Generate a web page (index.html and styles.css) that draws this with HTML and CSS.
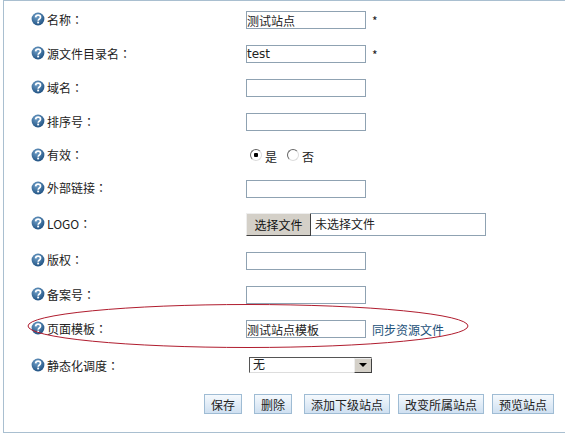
FILE: index.html
```html
<!DOCTYPE html>
<html lang="zh">
<head>
<meta charset="utf-8">
<title>站点</title>
<link rel="stylesheet" href="styles.css">
</head>
<body>
<svg width="0" height="0" class="defs">
  <defs>
    <radialGradient id="hg" cx="40%" cy="30%" r="75%">
      <stop offset="0" stop-color="#6f9fc8"/>
      <stop offset="1" stop-color="#1d4f80"/>
    </radialGradient>
    <symbol id="help" viewBox="0 0 14 14">
      <circle cx="7" cy="7" r="6.4" fill="url(#hg)"/>
      <path d="M4.6 5.4C4.7 3.9 5.8 3.2 7.1 3.2c1.4 0 2.4.8 2.4 2 0 1.9-2.2 1.7-2.3 3.6" fill="none" stroke="#fff" stroke-width="1.7"/>
      <rect x="6.2" y="9.6" width="1.9" height="1.8" fill="#fff"/>
    </symbol>
  </defs>
</svg>
<div class="panel">
  <form class="form">
    <div class="row">
      <label class="label"><svg class="help"><use href="#help"/></svg>名称<span class="colon">：</span></label>
      <div class="field"><input class="text" type="text" value="测试站点"><span class="req">*</span></div>
    </div>
    <div class="row">
      <label class="label"><svg class="help"><use href="#help"/></svg>源文件目录名<span class="colon">：</span></label>
      <div class="field"><input class="text" type="text" value="test"><span class="req">*</span></div>
    </div>
    <div class="row">
      <label class="label"><svg class="help"><use href="#help"/></svg>域名<span class="colon">：</span></label>
      <div class="field"><input class="text" type="text"></div>
    </div>
    <div class="row">
      <label class="label"><svg class="help"><use href="#help"/></svg>排序号<span class="colon">：</span></label>
      <div class="field"><input class="text" type="text"></div>
    </div>
    <div class="row row-short">
      <label class="label"><svg class="help"><use href="#help"/></svg>有效<span class="colon">：</span></label>
      <div class="field radios">
        <label class="radio"><input type="radio" name="valid" checked>是</label>
        <label class="radio"><input type="radio" name="valid">否</label>
      </div>
    </div>
    <div class="row row-short">
      <label class="label"><svg class="help"><use href="#help"/></svg>外部链接<span class="colon">：</span></label>
      <div class="field"><input class="text" type="text"></div>
    </div>
    <div class="row row-logo">
      <label class="label"><svg class="help"><use href="#help"/></svg>LOGO<span class="colon">：</span></label>
      <div class="field">
        <div class="file"><button class="file-btn" type="button">选择文件</button><span class="file-name">未选择文件</span></div>
      </div>
    </div>
    <div class="row row-tall">
      <label class="label"><svg class="help"><use href="#help"/></svg>版权<span class="colon">：</span></label>
      <div class="field"><input class="text" type="text"></div>
    </div>
    <div class="row">
      <label class="label"><svg class="help"><use href="#help"/></svg>备案号<span class="colon">：</span></label>
      <div class="field"><input class="text" type="text"></div>
    </div>
    <div class="row">
      <label class="label"><svg class="help"><use href="#help"/></svg>页面模板<span class="colon">：</span></label>
      <div class="field"><input class="text" type="text" value="测试站点模板"><a class="link" href="#">同步资源文件</a></div>
    </div>
    <div class="row row-select">
      <label class="label"><svg class="help"><use href="#help"/></svg>静态化调度<span class="colon">：</span></label>
      <div class="field">
        <div class="select-wrap">
          <select class="select"><option>无</option></select>
          <span class="select-arrow"></span>
        </div>
      </div>
    </div>
    <div class="actions">
      <button class="btn btn-wide" type="button">保存</button>
      <button class="btn btn-wide" type="button">删除</button>
      <button class="btn" type="button">添加下级站点</button>
      <button class="btn" type="button">改变所属站点</button>
      <button class="btn" type="button">预览站点</button>
    </div>
  </form>
  <svg class="oval" width="445" height="46" viewBox="0 0 445 46">
    <ellipse cx="222" cy="23" rx="220" ry="21.5" fill="none" stroke="#b01c2e" stroke-width="1"/>
  </svg>
</div>
</body>
</html>
```
FILE: styles.css
```css
html, body {
  margin: 0;
  padding: 0;
  background: #fff;
}
body {
  width: 565px;
  height: 436px;
  overflow: hidden;
  font-family: "Noto Sans CJK SC", "DejaVu Sans", sans-serif;
  font-size: 12px;
  color: #222;
}
.defs {
  position: absolute;
}
.panel {
  position: relative;
  box-sizing: border-box;
  height: 433px;
  margin-left: 3px;
  padding-top: 2px;
  border: 1px solid #a9bfd0;
  border-right: 0;
}
.row {
  display: flex;
  align-items: center;
  height: 34px;
}
.row-short {
  height: 33px;
}
.row-logo {
  height: 38px;
}
.row-tall {
  height: 35px;
}
.row-select {
  height: 40px;
}
.label {
  display: flex;
  align-items: center;
  width: 242px;
  padding: 0 0 2px 27px;
  box-sizing: border-box;
}
.colon {
  font-family: "Noto Sans CJK TC", sans-serif;
}
.help {
  width: 14px;
  height: 14px;
  margin-right: 2px;
  flex: none;
}
.field {
  display: flex;
  align-items: center;
}
.text {
  box-sizing: border-box;
  width: 120px;
  height: 18px;
  margin: 0;
  padding: 0;
  border: 1px solid #8fa2b2;
  font: 12px "DejaVu Sans", "Noto Sans CJK SC", sans-serif;
  color: #222;
  background: #fff;
  outline: none;
}
.req {
  margin-left: 6px;
}
.link {
  margin-left: 6px;
  color: #1b4f78;
  text-decoration: none;
}
.radios {
  padding-left: 4px;
  gap: 10px;
}
.radio {
  display: flex;
  align-items: center;
  gap: 3px;
  padding-top: 2px;
}
.radio input {
  appearance: none;
  box-sizing: border-box;
  width: 12px;
  height: 12px;
  margin: 0 0 4px;
  border-radius: 50%;
  border: 1px solid;
  border-color: #666 #ddd #ddd #666;
  background: #fff;
}
.radio input:checked {
  background: radial-gradient(circle, #000 0 2px, #fff 2.5px);
}
.file {
  box-sizing: border-box;
  display: flex;
  align-items: stretch;
  width: 240px;
  height: 23px;
  border: 1px solid #8fa2b2;
  border-left: 0;
}
.file-btn {
  box-sizing: border-box;
  width: 65px;
  margin: -1px 0;
  padding: 0;
  border: 1px solid;
  border-color: #eee #404040 #404040 #eee;
  background: #d4d0c8;
  font: inherit;
  color: #111;
}
.file-name {
  align-self: center;
  margin: 0 0 2px 4px;
}
.select-wrap {
  position: relative;
  margin: -2px 0 0 3px;
  width: 123px;
  height: 16px;
}
.select {
  appearance: none;
  display: block;
  box-sizing: border-box;
  width: 100%;
  height: 100%;
  margin: 0;
  padding: 0 0 0 3px;
  border: 1px solid;
  border-color: #555 #ddd #ddd #555;
  border-radius: 0;
  background: #fff;
  font: 12px "DejaVu Sans", "Noto Sans CJK SC", sans-serif;
  color: #222;
}
.select-arrow {
  position: absolute;
  top: 1px;
  right: 0;
  box-sizing: border-box;
  width: 18px;
  height: 15px;
  border: 1px solid;
  border-color: #eee #404040 #404040 #eee;
  background: #d4d0c8;
}
.select-arrow::after {
  content: "";
  position: absolute;
  left: 4px;
  top: 4px;
  border: 4px solid transparent;
  border-top: 4px solid #000;
  border-bottom: 0;
}
.actions {
  display: flex;
  justify-content: flex-end;
  gap: 8px;
  margin-top: 8px;
  padding-right: 11px;
}
.btn {
  height: 20px;
  margin: 0;
  padding: 0 6px;
  border: 1px solid #9fbcd4;
  background: linear-gradient(#f5f9fd, #cfe0f1);
  font: inherit;
  color: #222;
}
.btn-wide {
  margin-right: 4px;
}
.oval {
  position: absolute;
  left: 22px;
  top: 302px;
  pointer-events: none;
}
```
